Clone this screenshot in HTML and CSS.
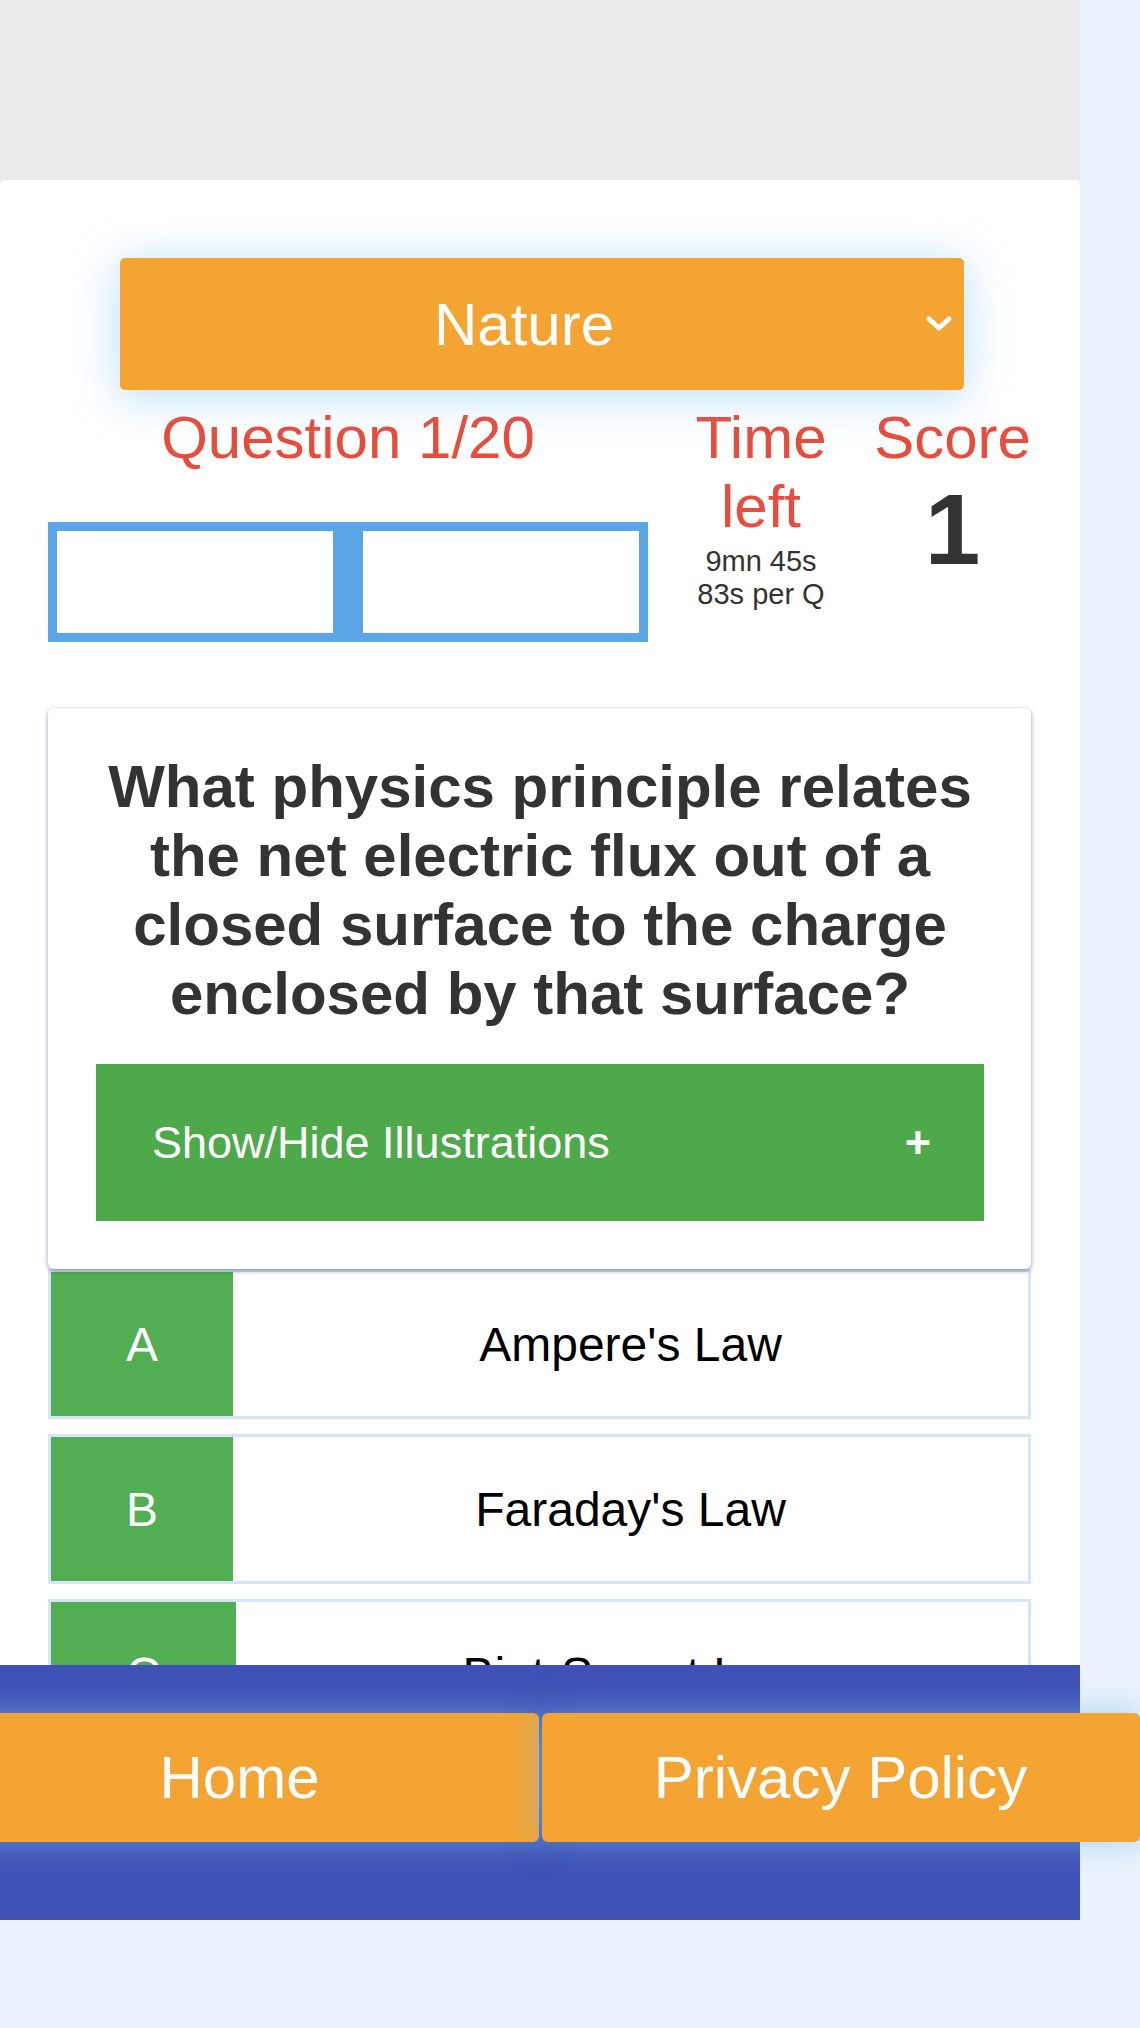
FILE: index.html
```html
<!DOCTYPE html>
<html lang="en">
<head>
    <meta charset="UTF-8">
    <meta name="viewport" content="width=device-width, initial-scale=1.0">
    <title>Quiz - Nature</title>
    <link rel="stylesheet" href="styles.css">
</head>
<body>

<div class="page">
    <!-- Ad space -->
    <div class="ad-space"></div>

    <div class="quiz">
        <div class="category-select">
            <span>Nature</span>
            <svg class="chevron" width="28" height="18" viewBox="0 0 28 18">
                <polyline points="4,4 14,13 24,4" fill="none" stroke="#fff" stroke-width="5" stroke-linecap="round"/>
            </svg>
        </div>

        <div class="stats">
            <div class="stat-progress">
                <div class="stat-title">Question 1/20</div>
                <div class="progress">
                    <div class="progress-cell"></div>
                    <div class="progress-cell"></div>
                </div>
            </div>
            <div class="stat-time">
                <div class="stat-title">Time<br>left</div>
                <div class="time-detail">9mn 45s<br>83s per Q</div>
            </div>
            <div class="stat-score">
                <div class="stat-title">Score</div>
                <div class="score-value">1</div>
            </div>
        </div>

        <div class="question-card">
            <h2>What physics principle relates the net electric flux out of a closed surface to the charge enclosed by that surface?</h2>
            <div class="illustrations-toggle">
                <span>Show/Hide Illustrations</span>
                <span class="toggle-sign">+</span>
            </div>
        </div>

        <div class="answers">
            <div class="answer">
                <div class="answer-letter">A</div>
                <div class="answer-text">Ampere's Law</div>
            </div>
            <div class="answer">
                <div class="answer-letter">B</div>
                <div class="answer-text">Faraday's Law</div>
            </div>
            <div class="answer">
                <div class="answer-letter">C</div>
                <div class="answer-text">Biot-Savart Law</div>
            </div>
        </div>
    </div>

    <div class="footer">
        <a class="footer-btn" href="#">Home</a>
        <a class="footer-btn" href="#">Privacy Policy</a>
    </div>
</div>

</body>
</html>
```

FILE: styles.css
```css
html {
    background-color: #eaf2fc;
}
body {
    font-family: "Liberation Sans", Arial, sans-serif;
    margin: 0;
    padding: 0;
    background-color: #eaf2fc;
}
.page {
    width: 1080px;
}
.ad-space {
    height: 180px;
    background-color: #eaeaea;
}
.quiz {
    height: 1485px;
    box-sizing: border-box;
    background: white;
    border-radius: 6px 6px 0 0;
    padding: 78px 49px 0 48px;
    overflow: hidden;
}
.category-select {
    position: relative;
    width: 844px;
    height: 132px;
    margin-left: 72px;
    box-sizing: border-box;
    padding-right: 36px;
    background-color: #f4a432;
    border-radius: 5px;
    box-shadow: 0 6px 44px rgba(110, 190, 240, 0.5);
    color: white;
    font-size: 60px;
    display: flex;
    align-items: center;
    justify-content: center;
}
.chevron {
    position: absolute;
    right: 11px;
    top: 57px;
}
.stats {
    display: flex;
    margin-top: 13px;
    text-align: center;
}
.stat-progress {
    width: 600px;
}
.stat-time {
    width: 226px;
}
.stat-score {
    flex: 1;
}
.stat-title {
    color: #e74c3c;
    font-size: 60px;
    line-height: 69px;
}
.progress {
    display: flex;
    gap: 30px;
    height: 120px;
    box-sizing: border-box;
    margin-top: 50px;
    padding: 9px;
    background-color: #5aa6e6;
}
.progress-cell {
    flex: 1;
    background: white;
}
.time-detail {
    color: #333;
    font-size: 29px;
    line-height: 33px;
    margin-top: 4px;
}
.score-value {
    color: #333;
    font-size: 100px;
    font-weight: bold;
    line-height: 115px;
}
.question-card {
    position: relative;
    z-index: 1;
    margin-top: 66px;
    padding: 44px 47px 48px 48px;
    background: white;
    border-radius: 6px;
    box-shadow: 0 2px 4px rgba(40, 60, 90, 0.45), 0 0 10px rgba(0, 0, 0, 0.06);
}
.question-card h2 {
    margin: 0 0 36px;
    color: #333;
    font-size: 60px;
    line-height: 69px;
    text-align: center;
}
.illustrations-toggle {
    height: 157px;
    box-sizing: border-box;
    padding: 0 53px 0 56px;
    background-color: #4ea94a;
    color: white;
    font-size: 45px;
    display: flex;
    align-items: center;
    justify-content: space-between;
}
.toggle-sign {
    font-weight: bold;
}
.answer {
    display: flex;
    height: 150px;
    box-sizing: border-box;
    border: 3px solid #d6e6f6;
    margin-bottom: 15px;
    font-size: 48px;
}
.answer-letter {
    padding: 0 75px;
    background-color: #52ae52;
    color: white;
    display: flex;
    align-items: center;
}
.answer-text {
    flex: 1;
    color: #000;
    display: flex;
    align-items: center;
    justify-content: center;
}
.footer {
    height: 255px;
    box-sizing: border-box;
    padding-top: 48px;
    background-color: #3f51b5;
    display: flex;
    justify-content: center;
    align-items: flex-start;
    gap: 3px;
}
.footer-btn {
    flex: 0 0 598px;
    height: 129px;
    background-color: #f4a432;
    border-radius: 6px;
    box-shadow: 0 0 32px rgba(120, 190, 240, 0.6);
    color: white;
    font-size: 60px;
    text-decoration: none;
    display: flex;
    align-items: center;
    justify-content: center;
}
```
